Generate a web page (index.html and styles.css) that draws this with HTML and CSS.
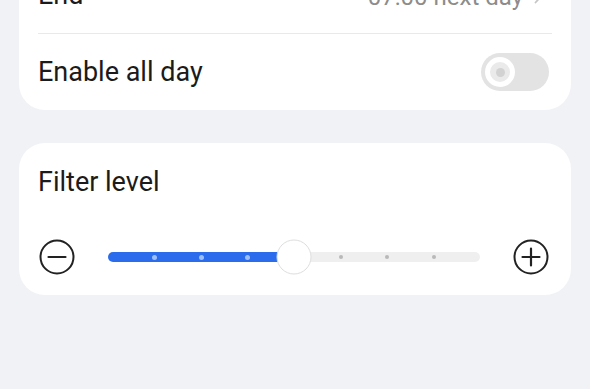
FILE: index.html
```html
<!DOCTYPE html>
<html lang="en">
<head>
<meta charset="utf-8">
<title>Filter settings</title>
<link rel="stylesheet" href="styles.css">
</head>
<body>
<main class="page">
  <section class="card card-schedule">
    <div class="row">
      <span class="label">End</span>
      <span class="value">07:00 next day
        <svg class="chev" width="8" height="14" viewBox="0 0 8 14"><path d="M1.5 1.5 L6.5 7 L1.5 12.5" fill="none" stroke="#c6c6c6" stroke-width="1.8" stroke-linecap="round" stroke-linejoin="round"/></svg>
      </span>
    </div>
    <div class="divider"></div>
    <div class="row">
      <span class="label">Enable all day</span>
      <span class="toggle"><span class="knob"><span class="knob-dot"></span></span></span>
    </div>
  </section>

  <section class="card card-filter">
    <h2 class="title">Filter level</h2>
    <div class="slider-row">
      <svg class="icon" width="38" height="38" viewBox="0 0 38 38"><circle cx="19" cy="19" r="16.5" fill="none" stroke="#222" stroke-width="2"/><path d="M10.5 19 H27.5" stroke="#222" stroke-width="2.2" stroke-linecap="round"/></svg>
      <div class="track">
        <div class="ticks">
          <span class="tick"></span>
          <span class="tick on"></span>
          <span class="tick on"></span>
          <span class="tick on"></span>
          <span class="tick"></span>
          <span class="tick off"></span>
          <span class="tick off"></span>
          <span class="tick off"></span>
          <span class="tick"></span>
        </div>
        <span class="thumb" style="left:50%"></span>
      </div>
      <svg class="icon" width="38" height="38" viewBox="0 0 38 38"><circle cx="19" cy="19" r="16.5" fill="none" stroke="#222" stroke-width="2"/><path d="M10.5 19 H27.5 M19 10.5 V27.5" stroke="#222" stroke-width="2.2" stroke-linecap="round"/></svg>
    </div>
  </section>
</main>
</body>
</html>
```
FILE: styles.css
```css
html, body {
  margin: 0;
  padding: 0;
  background: #f1f2f6;
  overflow: hidden;
}
body {
  font-family: Roboto, "Noto Sans", sans-serif;
  color: #1b1b1b;
}
.page {
  padding: 0 19px;
  display: flex;
  flex-direction: column;
  gap: 33px;
}
.card {
  background: #fff;
  border-radius: 26px;
  padding: 0 19px;
}
.card-schedule {
  margin-top: -43px;
}
.row {
  height: 76px;
  display: flex;
  align-items: center;
  justify-content: space-between;
}
.label {
  font-size: 27px;
  line-height: 32px;
}
.value {
  display: flex;
  align-items: center;
  gap: 11px;
  font-size: 24px;
  color: #8c8c8c;
  padding-right: 10px;
  padding-top: 4px;
}
.chev { display: block; }
.divider {
  height: 1px;
  background: #e9e9ec;
}
.toggle {
  width: 68px;
  height: 38px;
  border-radius: 19px;
  background: #e3e3e3;
  display: flex;
  align-items: center;
  padding-left: 4px;
  box-sizing: border-box;
  margin-right: 3px;
}
.knob {
  width: 30px;
  height: 30px;
  border-radius: 50%;
  box-sizing: border-box;
  border: 5px solid #fff;
  background: #eaeaea;
  display: flex;
  align-items: center;
  justify-content: center;
}
.knob-dot {
  width: 9px;
  height: 9px;
  border-radius: 50%;
  background: #d2d2d2;
}
.card-filter {
  padding: 23px 19px 20px;
}
.title {
  margin: 0;
  font-weight: 400;
  font-size: 27px;
  line-height: 32px;
}
.slider-row {
  margin-top: 41px;
  height: 36px;
  display: flex;
  align-items: center;
  gap: 32px;
  padding-right: 2px;
}
.icon { display: block; flex: none; }
.track {
  position: relative;
  flex: 1;
  height: 10px;
  border-radius: 5px;
  background: linear-gradient(to right, #2a6cec 50%, #efefef 50%);
}
.ticks {
  height: 100%;
  display: flex;
  justify-content: space-between;
  align-items: center;
}
.tick {
  width: 0;
  height: 0;
  position: relative;
}
.tick.on::after, .tick.off::after {
  content: "";
  position: absolute;
  width: 5px;
  height: 5px;
  left: -2.5px;
  top: -2.5px;
  border-radius: 50%;
}
.tick.on::after { background: #9dbff8; }
.tick.off::after { background: #b9b9b9; width: 4px; height: 4px; left: -2px; top: -2px; }
.thumb {
  position: absolute;
  top: 50%;
  width: 35px;
  height: 35px;
  border-radius: 50%;
  background: #fff;
  border: 1.5px solid #dedede;
  box-sizing: border-box;
  transform: translate(-50%, -50%);
}
```
